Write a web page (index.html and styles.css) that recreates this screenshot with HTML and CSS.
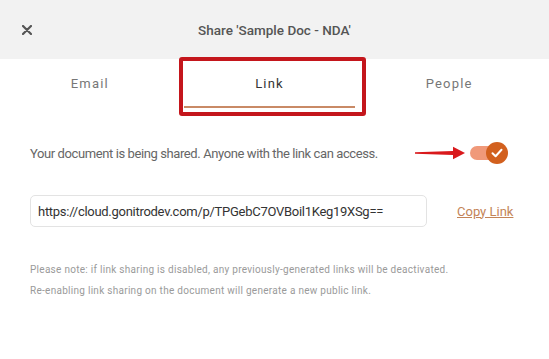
FILE: index.html
```html
<!DOCTYPE html>
<html>
<head>
<meta charset="utf-8">
<link rel="stylesheet" href="styles.css">
</head>
<body>
<div class="dialog">
  <div class="header">
    <div class="close">
      <svg width="10" height="10" viewBox="0 0 10 10"><path d="M1 1L9 9M9 1L1 9" stroke="#555" stroke-width="2.2" stroke-linecap="round"/></svg>
    </div>
    <div class="title">Share 'Sample Doc - NDA'</div>
    <div></div>
  </div>
  <div class="tabs">
    <div class="tab">Email</div>
    <div class="tab active">Link</div>
    <div class="tab">People</div>
    <div class="highlight"></div>
  </div>
  <div class="content">
    <div class="status-row">
      <span class="status">Your document is being shared. Anyone with the link can access.</span>
      <svg class="arrow" width="50" height="14" viewBox="0 0 50 14"><path d="M0 6.3L38 5 38 0.8 50 7 38 13.2 38 9 0 7.7Z" fill="#d9191c"/></svg>
      <div class="toggle">
        <div class="track"></div>
        <div class="knob">
          <svg width="12" height="10" viewBox="0 0 12 10"><path d="M1.5 5.2L4.6 8.2 10.5 1.8" stroke="#fff" stroke-width="2" fill="none" stroke-linecap="round" stroke-linejoin="round"/></svg>
        </div>
      </div>
    </div>
    <div class="link-row">
      <div class="url">https://cloud.gonitrodev.com/p/TPGebC7OVBoil1Keg19XSg==</div>
      <a class="copy">Copy Link</a>
    </div>
    <div class="notes">
      <p>Please note: if link sharing is disabled, any previously-generated links will be deactivated.</p>
      <p>Re-enabling link sharing on the document will generate a new public link.</p>
    </div>
  </div>
</div>
</body>
</html>
```
FILE: styles.css
```css
html, body {
  margin: 0;
  padding: 0;
  background: #fff;
}
body {
  width: 549px;
  height: 359px;
  overflow: hidden;
  font-family: Roboto, "Liberation Sans", sans-serif;
}
.header {
  height: 59px;
  background: #f2f2f2;
  display: grid;
  grid-template-columns: 1fr auto 1fr;
  align-items: center;
}
.close {
  padding-left: 22px;
  display: flex;
  align-items: center;
  padding-top: 1px;
}
.title {
  font-size: 13.5px;
  font-weight: 500;
  color: #555;
}
.tabs {
  position: relative;
  display: grid;
  grid-template-columns: repeat(3, 1fr);
  padding-right: 10px;
  height: 59px;
}
.tab {
  font-size: 13px;
  letter-spacing: 1.2px;
  color: #777;
  text-align: center;
  padding-top: 17px;
  margin: 0 3px;
  box-sizing: border-box;
  height: 49px;
}
.tab.active {
  color: #333;
  border-bottom: 2px solid #c98a66;
  margin: 0 4px 0 4px;
}
.highlight {
  position: absolute;
  left: 179px;
  top: -2px;
  width: 187px;
  height: 59px;
  box-sizing: border-box;
  border: 4px solid #c4161c;
  border-radius: 3px;
}
.content {
  padding: 23px 30px 0 30px;
}
.status-row {
  display: flex;
  align-items: center;
  height: 24px;
}
.status {
  flex: none;
  width: 385px;
  white-space: nowrap;
  font-size: 13px;
  letter-spacing: -0.4px;
  color: #666;
}
.arrow {
  flex: none;
}
.toggle {
  position: relative;
  flex: none;
  width: 40px;
  height: 24px;
  margin-left: 5px;
  display: flex;
  align-items: center;
}
.track {
  width: 30px;
  height: 14px;
  border-radius: 7px;
  background: #f0997a;
}
.knob {
  position: absolute;
  left: 16px;
  top: 1px;
  width: 22px;
  height: 22px;
  border-radius: 50%;
  background: #d2601e;
  display: flex;
  align-items: center;
  justify-content: center;
}
.link-row {
  display: flex;
  align-items: center;
  margin-top: 30px;
}
.url {
  flex: none;
  width: 397px;
  height: 32px;
  box-sizing: border-box;
  border: 1px solid #e3e3e3;
  border-radius: 5px;
  padding: 0 7px;
  display: flex;
  align-items: center;
  font-size: 13px;
  letter-spacing: -0.28px;
  color: #333;
  white-space: nowrap;
}
.copy {
  margin-left: 30px;
  font-size: 13px;
  color: #c38458;
  text-decoration: underline;
}
.notes {
  margin-top: 36px;
}
.notes p {
  margin: 0 0 8px 0;
  font-size: 10px;
  line-height: 13px;
  letter-spacing: 0.28px;
  color: #9a9a9a;
  white-space: nowrap;
}
```
